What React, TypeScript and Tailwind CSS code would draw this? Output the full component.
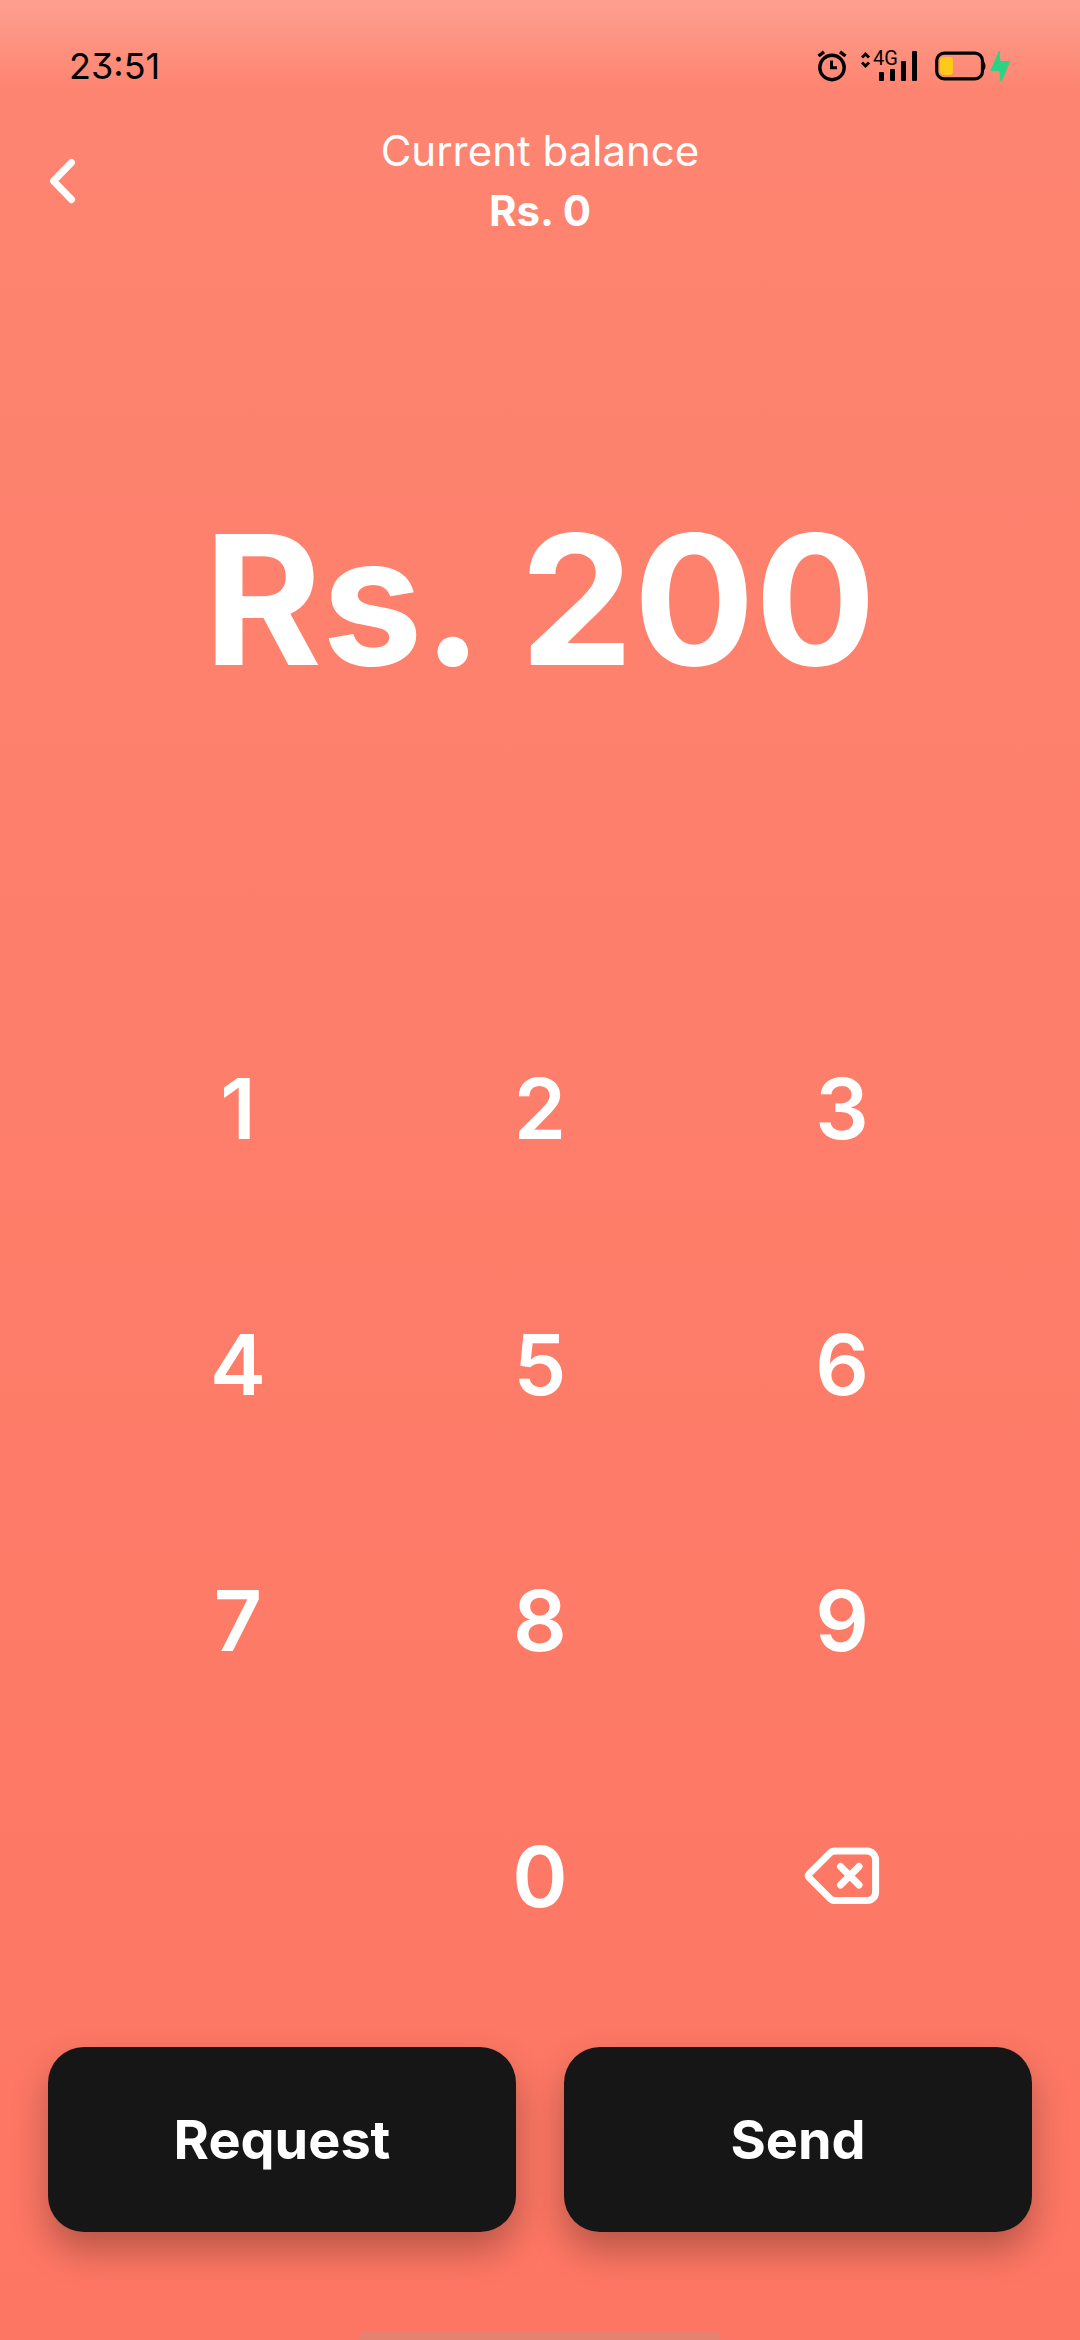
import { useState } from "react";

const KEYS = ["1", "2", "3", "4", "5", "6", "7", "8", "9"];

function AlarmIcon() {
  return (
    <svg width="30" height="32" viewBox="0 0 30 32" fill="none" stroke="#000" strokeWidth="3.4" aria-hidden="true">
      <circle cx="15" cy="17.5" r="12.2" />
      <path d="M1.5 6L7 1.8M23 1.8L28.5 6" />
      <path d="M14.5 10.5V17.8H20" strokeWidth="3" />
    </svg>
  );
}

function SignalIcon() {
  return (
    <div className="relative h-8 w-14">
      <svg width="56" height="32" viewBox="0 0 56 32" aria-hidden="true">
        <path d="M1 7.5L4.5 4L8 7.5M1 12.5L4.5 16L8 12.5" fill="none" stroke="#000" strokeWidth="3" />
        <rect x="18" y="22" width="5" height="9" rx="1" />
        <rect x="29" y="19" width="5" height="12" rx="1" />
        <rect x="40" y="11" width="5" height="20" rx="1" />
        <rect x="51" y="1" width="5" height="30" rx="1" />
      </svg>
      <span className="absolute top-0 left-3 font-['Roboto',sans-serif] text-[20px] leading-4">4G</span>
    </div>
  );
}

function BatteryIcon() {
  return (
    <svg width="76" height="32" viewBox="0 0 76 32" aria-hidden="true">
      <rect x="1.7" y="3.2" width="45.8" height="25.6" rx="7.5" fill="none" stroke="#000" strokeWidth="3.2" />
      <path d="M48 11.5C50.6 12.5 50.6 19.5 48 20.5Z" stroke="#000" />
      <rect x="5" y="7" width="13" height="18" rx="4" fill="#ffc91a" />
      <path
        d="M64.2 1.2L65 11.5H74.6L66.6 30.6H65.4L65 20.6H55.8Z"
        fill="#2dd384"
        stroke="#2dd384"
        strokeLinejoin="round"
      />
    </svg>
  );
}

function BackIcon() {
  return (
    <svg width="32" height="48" viewBox="0 0 32 48" fill="none" stroke="#fff" strokeWidth="7" strokeLinecap="round" strokeLinejoin="round" aria-hidden="true">
      <path d="M23.5 5.5L5.5 24L23.5 42.5" />
    </svg>
  );
}

function DeleteIcon() {
  return (
    <svg width="84" height="84" viewBox="0 0 84 84" fill="none" stroke="#fff" strokeWidth="7" strokeLinecap="round" strokeLinejoin="round" aria-hidden="true">
      <path d="M9.1 42.6L29.6 63.1C31.2 64.8 33 65.6 35.2 65.6H67C71.8 65.6 75.6 61.8 75.6 57V25C75.6 20 71.8 16 67 16H35.2C33 16 31.2 16.8 29.6 18.4L9.1 38.9C8 40 8 41.5 9.1 42.6Z" />
      <path d="M40.5 31.5L59 50M59 31.5L40.5 50" />
    </svg>
  );
}

export default function App() {
  const [amount, setAmount] = useState("200");

  const press = (key: string) => setAmount((a) => (a === "0" ? key : a + key));
  const erase = () => setAmount((a) => (a.length > 1 ? a.slice(0, -1) : "0"));

  return (
    <main className="flex min-h-screen flex-col bg-linear-to-b from-[#fd8571] to-[#fd7663] font-['Inter',sans-serif] text-white [font-optical-sizing:none]">
      <div className="flex h-[120px] items-center justify-between bg-linear-to-b from-white/22 to-transparent to-75% px-[69px] pt-3 text-black">
        <time className="text-[36px] leading-10 [font-feature-settings:'cv09']">23:51</time>
        <div className="flex items-center gap-[18px]">
          <div className="flex items-center gap-[14px]">
            <AlarmIcon />
            <SignalIcon />
          </div>
          <BatteryIcon />
        </div>
      </div>

      <header className="grid grid-cols-[1fr_auto_1fr] items-center px-12">
        <button type="button" aria-label="Back" className="justify-self-start">
          <BackIcon />
        </button>
        <div className="pt-px text-center text-[42px] leading-[60px]">
          <p>Current balance</p>
          <p className="font-bold">Rs. 0</p>
        </div>
      </header>

      <section className="flex flex-1 items-center justify-center pb-[22px]">
        <output className="text-[180px] leading-none font-bold">Rs. {amount}</output>
      </section>

      <section aria-label="Keypad" className="grid grid-cols-3 px-[87px] text-[84px] leading-none font-semibold">
        {KEYS.map((key) => (
          <button key={key} type="button" className="h-64" onClick={() => press(key)}>
            {key}
          </button>
        ))}
        <button type="button" className="col-start-2 h-64" onClick={() => press("0")}>
          0
        </button>
        <button type="button" aria-label="Delete" className="flex h-64 items-center justify-center" onClick={erase}>
          <DeleteIcon />
        </button>
      </section>

      <div className="grid grid-cols-2 gap-12 px-12 pt-[42px] pb-[99px] text-[54px] leading-none font-bold">
        <button type="button" className="h-[185px] rounded-[36px] bg-[#161616] shadow-[0_18px_36px_rgba(0,0,0,0.28)]">
          Request
        </button>
        <button type="button" className="h-[185px] rounded-[36px] bg-[#161616] shadow-[0_18px_36px_rgba(0,0,0,0.28)]">
          Send
        </button>
      </div>

      <div className="mx-auto h-[9px] w-1/3 rounded-t-md bg-[#e5816f]" />
    </main>
  );
}
